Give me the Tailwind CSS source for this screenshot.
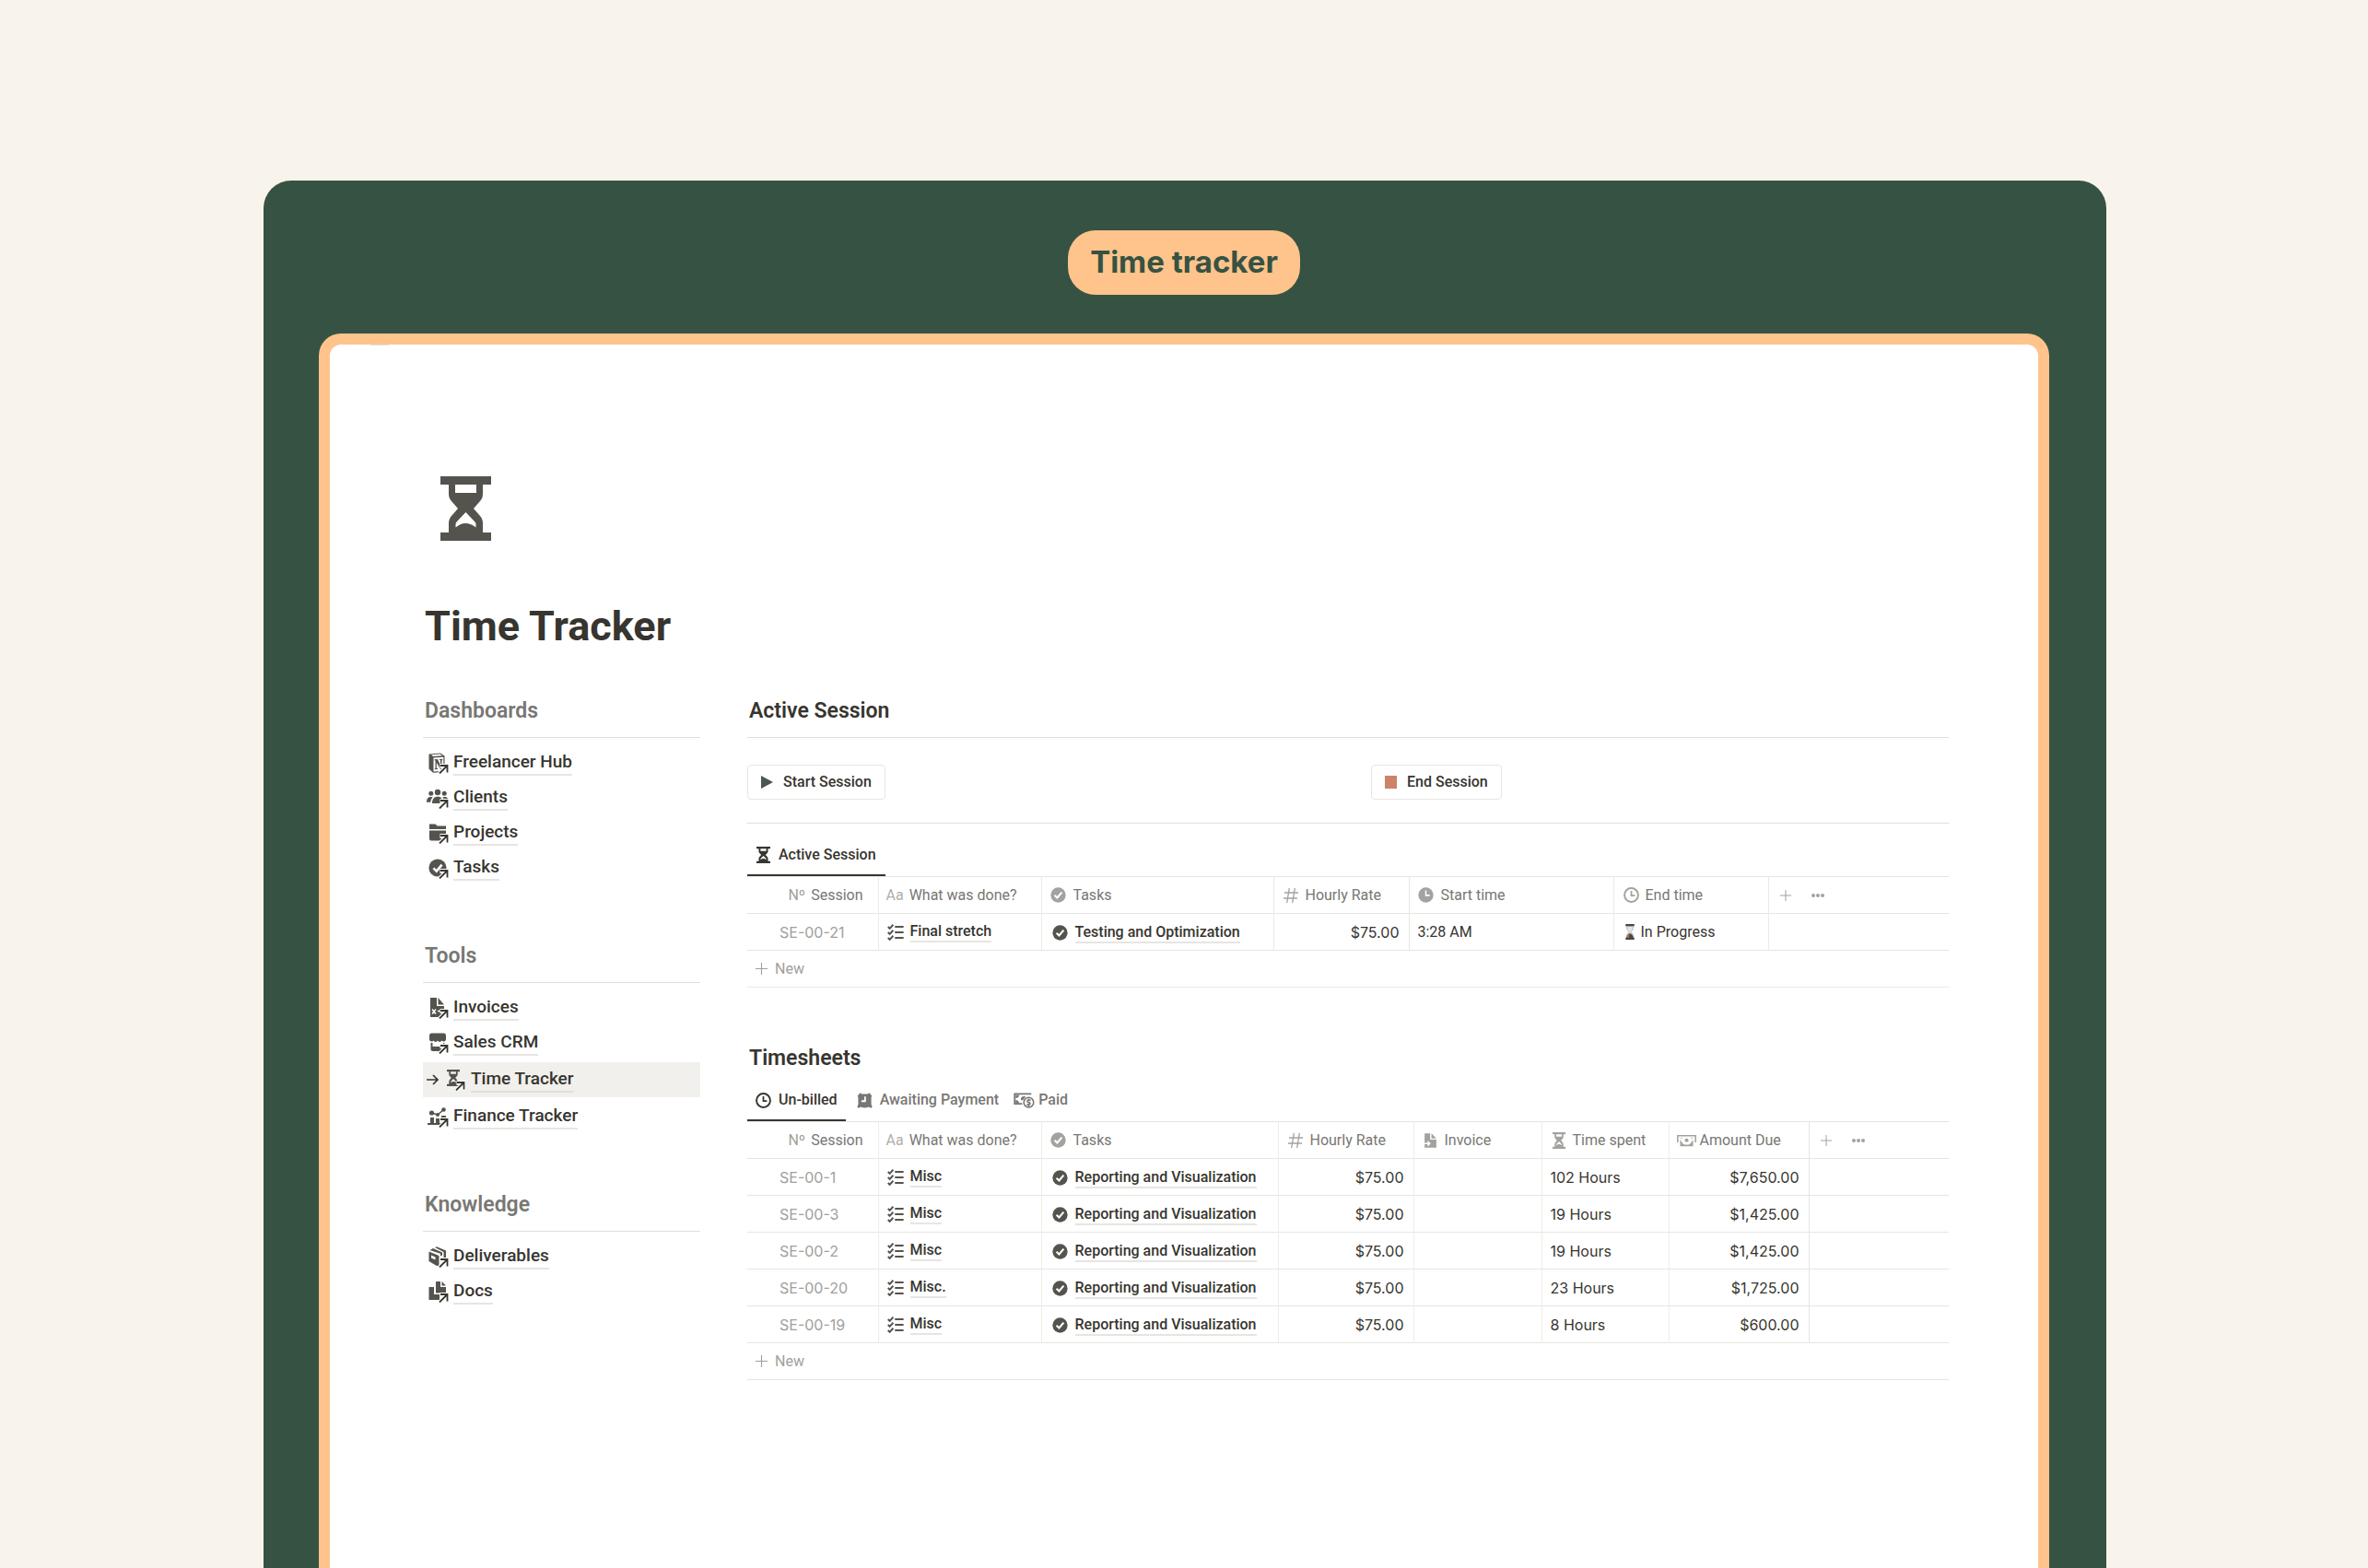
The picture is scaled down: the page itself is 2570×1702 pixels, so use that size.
<!DOCTYPE html>
<html lang="en">
<head>
<meta charset="utf-8">
<meta name="viewport" content="width=device-width, initial-scale=1">
<title>Time Tracker</title>
<script src="https://cdn.jsdelivr.net/npm/@tailwindcss/browser@4"></script>
</head>
<body class="bg-[#f8f3eb] font-[Roboto,sans-serif] text-base text-[#37352f]">

<!-- Icon sprite -->
<svg class="hidden" aria-hidden="true">
  <defs>
    <symbol id="hourglass" viewBox="0 0 55 70" preserveAspectRatio="none">
      <path fill="currentColor" fill-rule="evenodd" d="M0 0H55V9H46V19C46 22 45 25 43 27L36 35L43 43C45 45 46 48 46 51V61H55V70H0V61H9V51C9 48 10 45 12 43L19 35L12 27C10 25 9 22 9 19V9H0ZM16 9H39V18H16ZM27.500 39L37 49C38 50 38.500 51 38.500 52V55.500C35 53 32 51 27.500 51S20 53 16.500 55.500V52C16.500 51 17 50 18 49Z"/>
    </symbol>
    <!-- arrow marking a linked page -->
    <symbol id="link-arrow" viewBox="0 0 24 24">
      <path fill="none" stroke="#fff" stroke-width="5" d="M14.500 15.500H22.500V23.500M22 16L14 24"/>
      <path fill="none" stroke="#37352f" stroke-width="1.800" d="M15 15H22.500V22.500M22 15.500L14 23.500"/>
    </symbol>
    <symbol id="notion" viewBox="0 0 24 24">
      <path fill="currentColor" d="M3 2.500L15 1.500L19.500 4.500V22L7 22.800L2.500 18.500V3Z"/>
      <path fill="#fff" d="M5 3.200L14.600 2.500L17 4.200L7 5ZM7.500 6.500L18.300 5.800V20.800L7.500 21.500Z"/>
      <path fill="currentColor" d="M8.500 8.300L11.800 8.100L15 14.200V9.300L13.900 9.100V8.100L17.300 7.900V8.900L16.500 9.200V19L15 19.100L10.800 11.800V17.800L12 18.100V19.100L8.700 19.300V18.300L9.500 18V9.500L8.500 9.300Z"/>
    </symbol>
    <symbol id="people" viewBox="0 0 24 24">
      <g fill="currentColor"><circle cx="12" cy="6" r="3.200"/><circle cx="4.800" cy="7.300" r="2.500"/><circle cx="19.200" cy="7.300" r="2.500"/>
      <path d="M6 18C6 13.500 8 10.800 12 10.800S18 13.500 18 18ZM0 16.800C0 13 1.500 11 4.800 11C5.500 11 6 11.100 6.600 11.400C5.200 12.800 4.500 14.500 4.300 16.800ZM24 16.800C24 13 22.500 11 19.200 11C18.500 11 18 11.100 17.400 11.400C18.800 12.800 19.500 14.500 19.700 16.800Z"/></g>
    </symbol>
    <symbol id="folder" viewBox="0 0 24 24">
      <path fill="currentColor" d="M3 2.500H9.500L11.500 4.500H21V8H3ZM3 9.500H21V18.500Q21 20.500 19 20.500H5Q3 20.500 3 18.500Z"/>
    </symbol>
    <symbol id="check" viewBox="0 0 24 24">
      <circle cx="12" cy="12" r="11.500" fill="currentColor"/>
      <path fill="none" stroke="#fff" stroke-width="3" d="M6.500 12.500L10.500 16.300L17.500 8"/>
    </symbol>
    <symbol id="invoice" viewBox="0 0 24 24">
      <path fill="currentColor" d="M4 1H11V10H19V22H4ZM12.500 1L19 8.500H12.500Z"/>
      <path fill="none" stroke="#fff" stroke-width="1.500" d="M6 13.500L10 18.500M10 13.500L6 18.500M12 15.500H16"/>
    </symbol>
    <symbol id="invoice-arrow" viewBox="0 0 24 24">
      <path fill="currentColor" d="M3 1H11.500V10.500H21V23H3ZM13.500 1L21 8.700H13.500Z"/>
      <path fill="none" stroke="#fff" stroke-width="2" d="M3 16.500H10M7.500 13L11 16.500L7.500 20"/>
    </symbol>
    <symbol id="store" viewBox="0 0 24 24">
      <path fill="currentColor" d="M5 1.500H19Q21 1.500 21 4V8.500A2.500 2.500 0 0 1 16.500 9.500A2.500 2.500 0 0 1 12 9.500A2.500 2.500 0 0 1 7.500 9.500A2.500 2.500 0 0 1 3 8.500V4Q3 1.500 5 1.500ZM4.500 12H6.500V16H18V12H19.500V21H6.500Q4.500 21 4.500 19Z"/>
    </symbol>
    <symbol id="chart" viewBox="0 0 24 24">
      <g fill="currentColor"><circle cx="5.500" cy="8" r="2.600"/><circle cx="12" cy="10" r="2"/><circle cx="18.500" cy="4.500" r="2.300"/><path d="M1 19H4V13H8V19H10V14H14V19H16V11H21V21H1Z"/></g>
      <path fill="none" stroke="currentColor" stroke-width="1.500" d="M5.500 8L12 10L18.500 4.500"/>
    </symbol>
    <symbol id="box" viewBox="0 0 24 24">
      <path fill="currentColor" fill-rule="evenodd" d="M2.500 6.500L13.500 11V22.500L10 21.500L2.500 17ZM5 10.500V13.500L9.500 15.500V12.500ZM3.500 5L7 3L17 7.500V10.500L15 11.500V8.800ZM9 2L11 1.200L21 5.500V16L18.500 17V7Z"/>
    </symbol>
    <symbol id="docs" viewBox="0 0 24 24">
      <path fill="currentColor" d="M2.500 7H8V15H14V21H2.500ZM10 1H15V7H21V13.500H10ZM16.500 1L21 5.500H16.500Z"/>
    </symbol>
    <symbol id="checklist" viewBox="0 0 24 24">
      <path fill="none" stroke="currentColor" stroke-width="2.600" d="M1 4L3.500 6.500L8.500 1M1 12L3.500 14.500L8.500 9M1 20L3.500 22.500L8.500 17M11 4H23.500M11 12H23.500M11 20H23.500"/>
    </symbol>
    <symbol id="hash" viewBox="0 0 24 24">
      <path fill="none" stroke="currentColor" stroke-width="2" d="M9.500 0L5.500 24M18.500 0L14.500 24M1.500 7.500H24M0 16.500H22.500"/>
    </symbol>
    <symbol id="clock-solid" viewBox="0 0 24 24">
      <circle cx="12" cy="12" r="11.500" fill="currentColor"/><path fill="none" stroke="#fff" stroke-width="2.200" d="M12 5V12.500H18"/>
    </symbol>
    <symbol id="clock" viewBox="0 0 24 24">
      <circle cx="12" cy="12" r="10.500" fill="none" stroke="currentColor" stroke-width="2.700"/><path fill="none" stroke="currentColor" stroke-width="2.500" d="M12 5.500V13H17.500"/>
    </symbol>
    <symbol id="alarm" viewBox="0 0 24 24">
      <path fill="currentColor" d="M1 5L5 .5L7.500 2H16.500L19 .5L23 5L22 7V18L23.500 22L21.500 23.500L18 22Q12 24.500 6 22L2.500 23.500L.5 22L2 18V7Z"/><path fill="none" stroke="#fff" stroke-width="2.600" d="M12.500 6V13H7"/>
    </symbol>
    <symbol id="cash" viewBox="0 0 32 24">
      <path fill="none" stroke="currentColor" stroke-width="2.500" d="M13 17H1.500V2H27"/>
      <path fill="currentColor" d="M3 3.500H8.500Q8 8 3 8.500ZM3 11Q7.500 11.500 8.500 16.500H3ZM11 10.500Q10.500 5.500 16 5.500H18.500L14 11.500H12Z"/>
      <circle cx="23" cy="15" r="7.500" fill="none" stroke="currentColor" stroke-width="2.200"/>
      <path fill="none" stroke="currentColor" stroke-width="2.400" d="M26 12C21.500 10 19 14 23 15S24.500 19.500 20 18M23 9V11.500M23 18.500V21"/>
    </symbol>
    <symbol id="bill" viewBox="0 0 30 24" preserveAspectRatio="none">
      <path fill="none" stroke="currentColor" stroke-width="2.200" d="M1.200 15V4.200H28.800V15"/>
      <path fill="currentColor" d="M5 10.500L9.500 17.500Q15 20 20.500 17.500L25 10.500V21.500H5ZM5 7.500H9L7 9ZM25 7.500H21L23 9Z"/>
      <circle cx="15" cy="11.500" r="3" fill="currentColor"/>
    </symbol>
    <symbol id="plus" viewBox="0 0 14 14"><path fill="none" stroke="currentColor" stroke-width="1.200" d="M7 0V14M0 7H14"/></symbol>
    <symbol id="dots" viewBox="0 0 14 14"><g fill="currentColor"><circle cx="2" cy="7" r="2"/><circle cx="7" cy="7" r="2"/><circle cx="12" cy="7" r="2"/></g></symbol>
    <symbol id="sand" viewBox="0 0 12 18">
      <path fill="#e3e6e8" stroke="#a9adb0" stroke-width=".8" d="M2 2.500H10Q10 7 7 9Q10 11 10 15.500H2Q2 11 5 9Q2 7 2 2.500Z"/>
      <path fill="#4b4744" d="M1 0H11V2.500H1ZM1 15.500H11V18H1ZM2.200 15.500Q3 11.500 6 10.500Q9.500 12 10 15.500Z"/><path fill="#c7694b" d="M2.500 15.500Q3 12.500 5.500 11.500L5 15.500Z"/>
    </symbol>
  </defs>
</svg>

<div class="flex min-h-screen flex-col pt-[196px] pr-[284px] pl-[286px]">
  <div class="flex flex-1 flex-col rounded-t-[30px] bg-[#365242] pt-[54px] pr-[62px] pl-[60px]">
    <div class="flex justify-center">
      <div class="flex h-[70px] items-center rounded-[30px] bg-[#ffc38c] px-6 font-[Inter,sans-serif] text-[33px] font-bold text-[#365242]">Time tracker</div>
    </div>

    <main class="relative mt-[42px] flex-1 rounded-t-3xl border-12 border-b-0 border-[#ffc38c] bg-white pt-[143px] pr-[97px] pl-[101px]">
      <span class="absolute top-0 left-11 h-px w-5 bg-[#dfe3ea]"></span>
      <svg class="ml-[19px] h-[70px] w-[55px] text-[#55534e]"><use href="#hourglass"/></svg>
      <h1 class="mt-[63px] pl-[2px] text-[45px] leading-[60px] font-bold">Time Tracker</h1>

      <div class="mt-[42px] flex gap-[51px]">
        <!-- Sidebar -->
        <nav class="flex w-[301px] shrink-0 flex-col gap-[57px] text-[19px] font-medium text-[#37352f]">
          <section>
            <h2 class="pl-[2px] text-[23px] leading-10 font-semibold text-[#787774]">Dashboards</h2>
            <ul class="mt-2 border-t border-[#dededc] pt-2">
              <li class="flex h-[38px] items-center gap-[5px] pl-1">
                <svg class="size-6 overflow-visible text-[#55534e]"><use href="#notion"/><use href="#link-arrow"/></svg>
                <a href="#" class="border-b-2 border-[#e6e5e1] leading-[26px]">Freelancer Hub</a>
              </li>
              <li class="flex h-[38px] items-center gap-[5px] pl-1">
                <svg class="size-6 overflow-visible text-[#55534e]"><use href="#people"/><use href="#link-arrow"/></svg>
                <a href="#" class="border-b-2 border-[#e6e5e1] leading-[26px]">Clients</a>
              </li>
              <li class="flex h-[38px] items-center gap-[5px] pl-1">
                <svg class="size-6 overflow-visible text-[#55534e]"><use href="#folder"/><use href="#link-arrow"/></svg>
                <a href="#" class="border-b-2 border-[#e6e5e1] leading-[26px]">Projects</a>
              </li>
              <li class="flex h-[38px] items-center gap-[5px] pl-1">
                <svg class="size-6 overflow-visible text-[#55534e]"><use href="#check" x="2" y="2" width="20" height="20"/><use href="#link-arrow"/></svg>
                <a href="#" class="border-b-2 border-[#e6e5e1] leading-[26px]">Tasks</a>
              </li>
            </ul>
          </section>
          <section>
            <h2 class="pl-[2px] text-[23px] leading-10 font-semibold text-[#787774]">Tools</h2>
            <ul class="mt-2 border-t border-[#dededc] pt-2">
              <li class="flex h-[38px] items-center gap-[5px] pl-1">
                <svg class="size-6 overflow-visible text-[#55534e]"><use href="#invoice"/><use href="#link-arrow"/></svg>
                <a href="#" class="border-b-2 border-[#e6e5e1] leading-[26px]">Invoices</a>
              </li>
              <li class="flex h-[38px] items-center gap-[5px] pl-1">
                <svg class="size-6 overflow-visible text-[#55534e]"><use href="#store"/><use href="#link-arrow"/></svg>
                <a href="#" class="border-b-2 border-[#e6e5e1] leading-[26px]">Sales CRM</a>
              </li>
              <li class="my-[2px] flex h-[38px] items-center bg-[#f2f0ec] pl-1">
                <svg class="mr-2 h-4 w-[13px]" viewBox="0 0 13 16"><path fill="none" stroke="#37352f" stroke-width="1.700" d="M0 8H12M7 3L12 8L7 13"/></svg>
                <svg class="mr-[3px] size-6 overflow-visible text-[#55534e]"><use href="#hourglass" x="1" y="1" width="14" height="18"/><use href="#link-arrow" x="-3"/></svg>
                <a href="#" class="border-b-2 border-[#e0dfda] leading-[26px]">Time Tracker</a>
              </li>
              <li class="flex h-[38px] items-center gap-[5px] pl-1">
                <svg class="size-6 overflow-visible text-[#55534e]"><use href="#chart"/><use href="#link-arrow"/></svg>
                <a href="#" class="border-b-2 border-[#e6e5e1] leading-[26px]">Finance Tracker</a>
              </li>
            </ul>
          </section>
          <section>
            <h2 class="pl-[2px] text-[23px] leading-10 font-semibold text-[#787774]">Knowledge</h2>
            <ul class="mt-2 border-t border-[#dededc] pt-2">
              <li class="flex h-[38px] items-center gap-[5px] pl-1">
                <svg class="size-6 overflow-visible text-[#55534e]"><use href="#box"/><use href="#link-arrow"/></svg>
                <a href="#" class="border-b-2 border-[#e6e5e1] leading-[26px]">Deliverables</a>
              </li>
              <li class="flex h-[38px] items-center gap-[5px] pl-1">
                <svg class="size-6 overflow-visible text-[#55534e]"><use href="#docs"/><use href="#link-arrow"/></svg>
                <a href="#" class="border-b-2 border-[#e6e5e1] leading-[26px]">Docs</a>
              </li>
            </ul>
          </section>
        </nav>

        <!-- Content -->
        <div class="min-w-0 flex-1">
          <section>
            <h2 class="pl-[2px] text-[23px] leading-10 font-semibold">Active Session</h2>
            <div class="mt-2 grid grid-cols-[677px_1fr] border-y border-[#dededc] pt-[29px] pb-[25px] font-medium">
              <div><button class="flex h-[38px] items-center rounded border border-[#e6e5e1] px-[14px]"><svg class="mr-[11px] h-[14px] w-[13px]" viewBox="0 0 13 14"><path fill="#4d5651" d="M0 0L13 7L0 14Z"/></svg>Start Session</button></div>
              <div><button class="flex h-[38px] items-center rounded border border-[#e6e5e1] px-[14px]"><span class="mr-[11px] h-[14px] w-[13px] bg-[#cd8367]"></span>End Session</button></div>
            </div>

            <div class="mt-[13px] flex font-medium">
              <button class="flex h-11 items-center border-b-2 border-[#37352f] px-[10px]"><svg class="mr-[9px] h-[18px] w-[15px]"><use href="#hourglass"/></svg>Active Session</button>
            </div>
            <table class="w-full table-fixed border-collapse border-y border-[#e6e5e1] text-left">
              <colgroup><col class="w-[142px]"><col class="w-[177px]"><col class="w-[252px]"><col class="w-[147px]"><col class="w-[222px]"><col class="w-[168px]"><col></colgroup>
              <thead>
                <tr class="h-10 border-b border-[#e6e5e1] text-[#787774]">
                  <th class="border-r border-[#edeae5] p-0 font-normal"><span class="flex items-center justify-end pr-4"><span class="mr-[6px] text-[#a09f9b]">Nº</span>Session</span></th>
                  <th class="border-r border-[#edeae5] p-0 font-normal"><span class="flex items-center pl-2"><span class="mr-[6px] text-[#b0afab]">Aa</span>What was done?</span></th>
                  <th class="border-r border-[#edeae5] p-0 font-normal"><span class="flex items-center pl-[9px]"><svg class="mr-2 size-[17px] text-[#a3a29e]"><use href="#check"/></svg>Tasks</span></th>
                  <th class="border-r border-[#e6e5e1] p-0 font-normal"><span class="flex items-center pl-[10px]"><svg class="mr-2 h-[18px] w-4 text-[#a3a29e]"><use href="#hash"/></svg>Hourly Rate</span></th>
                  <th class="border-r border-[#edeae5] p-0 font-normal"><span class="flex items-center pl-[9px]"><svg class="mr-2 size-[17px] text-[#a3a29e]"><use href="#clock-solid"/></svg>Start time</span></th>
                  <th class="border-r border-[#edeae5] p-0 font-normal"><span class="flex items-center pl-[10px]"><svg class="mr-[7px] size-[17px] text-[#a3a29e]"><use href="#clock"/></svg>End time</span></th>
                  <th class="p-0 font-normal"><span class="flex items-center gap-[22px] pl-3 text-[#a3a29e]"><button aria-label="Add property"><svg class="size-3"><use href="#plus"/></svg></button><button aria-label="More"><svg class="size-[14px]"><use href="#dots"/></svg></button></span></th>
                </tr>
              </thead>
              <tbody>
                <tr class="h-10">
                  <td class="border-r border-[#edeae5] p-0 pl-[35px] font-[Inter,sans-serif] text-[#a09f9b]">SE-00-21</td>
                  <td class="border-r border-[#edeae5] p-0"><span class="flex items-center pl-[9px] font-medium"><svg class="mr-[7px] size-[18px] text-[#55534e]"><use href="#checklist"/></svg><a href="#" class="border-b-2 border-[#e6e5e1] leading-5">Final stretch</a></span></td>
                  <td class="border-r border-[#edeae5] p-0"><span class="flex items-center pt-[2px] pl-[11px] font-medium"><svg class="mr-2 size-[17px] text-[#55534e]"><use href="#check"/></svg><a href="#" class="border-b-2 border-[#e6e5e1] leading-5">Testing and Optimization</a></span></td>
                  <td class="border-r border-[#e6e5e1] p-0 pr-[10px] text-right font-[Inter,sans-serif]">$75.00</td>
                  <td class="border-r border-[#edeae5] p-0 pl-[9px]">3:28 AM</td>
                  <td class="border-r border-[#edeae5] p-0"><span class="flex items-center pl-[11px]"><svg class="mr-[6px] h-[17px] w-3"><use href="#sand"/></svg>In Progress</span></td>
                  <td class="p-0"></td>
                </tr>
              </tbody>
            </table>
            <button class="flex h-10 w-full items-center border-b border-[#edeae5] pl-[9px] text-[#a09f9b]"><svg class="mr-2 size-[13px]"><use href="#plus"/></svg>New</button>
          </section>

          <section class="mt-[57px]">
            <h2 class="pl-[2px] text-[23px] leading-10 font-semibold">Timesheets</h2>
            <div class="mt-1 flex font-medium text-[#787774]">
              <button class="flex h-11 items-center border-b-2 border-[#37352f] px-[9px] text-[#37352f]"><svg class="mr-2 size-[17px]"><use href="#clock"/></svg>Un-billed</button>
              <button class="flex h-11 items-center border-b-2 border-transparent pr-2 pl-3"><svg class="mr-2 size-[17px]"><use href="#alarm"/></svg>Awaiting Payment</button>
              <button class="flex h-11 items-center border-b-2 border-transparent px-2"><svg class="mr-1 h-[17px] w-[23px]"><use href="#cash"/></svg>Paid</button>
            </div>
            <table class="w-full table-fixed border-collapse border-y border-[#e6e5e1] text-left">
              <colgroup><col class="w-[142px]"><col class="w-[177px]"><col class="w-[257px]"><col class="w-[147px]"><col class="w-[139px]"><col class="w-[138px]"><col class="w-[152px]"><col></colgroup>
              <thead>
                <tr class="h-10 border-b border-[#e6e5e1] text-[#787774]">
                  <th class="border-r border-[#f1ece3] p-0 font-normal"><span class="flex items-center justify-end pr-4"><span class="mr-[6px] text-[#a09f9b]">Nº</span>Session</span></th>
                  <th class="border-r border-[#f1ece3] p-0 font-normal"><span class="flex items-center pl-2"><span class="mr-[6px] text-[#b0afab]">Aa</span>What was done?</span></th>
                  <th class="border-r border-[#f1ece3] p-0 font-normal"><span class="flex items-center pl-[9px]"><svg class="mr-2 size-[17px] text-[#a3a29e]"><use href="#check"/></svg>Tasks</span></th>
                  <th class="border-r border-[#f1ece3] p-0 font-normal"><span class="flex items-center pl-[10px]"><svg class="mr-2 h-[18px] w-4 text-[#a3a29e]"><use href="#hash"/></svg>Hourly Rate</span></th>
                  <th class="border-r border-[#f1ece3] p-0 font-normal"><span class="flex items-center pl-[9px]"><svg class="mr-[7px] h-[18px] w-[17px] text-[#a3a29e]"><use href="#invoice-arrow"/></svg>Invoice</span></th>
                  <th class="border-r border-[#f1ece3] p-0 font-normal"><span class="flex items-center pl-[11px]"><svg class="mr-2 h-[18px] w-[14px] text-[#a3a29e]"><use href="#hourglass"/></svg>Time spent</span></th>
                  <th class="border-r border-[#e6e5e1] p-0 font-normal"><span class="flex items-center pl-2"><svg class="mr-1 h-4 w-[21px] text-[#a3a29e]"><use href="#bill"/></svg>Amount Due</span></th>
                  <th class="p-0 font-normal"><span class="flex items-center gap-[22px] pl-3 text-[#a3a29e]"><button aria-label="Add property"><svg class="size-3"><use href="#plus"/></svg></button><button aria-label="More"><svg class="size-[14px]"><use href="#dots"/></svg></button></span></th>
                </tr>
              </thead>
              <tbody id="rows"></tbody>
            </table>
            <button class="flex h-10 w-full items-center border-b border-[#e6e5e1] pl-[9px] text-[#a09f9b]"><svg class="mr-2 size-[13px]"><use href="#plus"/></svg>New</button>
          </section>
        </div>
      </div>
    </main>
  </div>
</div>

<script>
  const sessions = [
    ['SE-00-1', 'Misc', '102 Hours', '$7,650.00'],
    ['SE-00-3', 'Misc', '19 Hours', '$1,425.00'],
    ['SE-00-2', 'Misc', '19 Hours', '$1,425.00'],
    ['SE-00-20', 'Misc.', '23 Hours', '$1,725.00'],
    ['SE-00-19', 'Misc', '8 Hours', '$600.00'],
  ];
  document.getElementById('rows').innerHTML = sessions.map(([id, work, hours, due]) => `
    <tr class="h-10 border-b border-[#e6e5e1]">
      <td class="border-r border-[#f1ece3] p-0 pl-[35px] font-[Inter,sans-serif] text-[#a09f9b]">${id}</td>
      <td class="border-r border-[#f1ece3] p-0"><span class="flex items-center pl-[9px] font-medium"><svg class="mr-[7px] size-[18px] text-[#55534e]"><use href="#checklist"/></svg><a href="#" class="border-b-2 border-[#e6e5e1] leading-5">${work}</a></span></td>
      <td class="border-r border-[#f1ece3] p-0"><span class="flex items-center pt-[2px] pl-[11px] font-medium"><svg class="mr-2 size-[17px] text-[#55534e]"><use href="#check"/></svg><a href="#" class="border-b-2 border-[#e6e5e1] leading-5">Reporting and Visualization</a></span></td>
      <td class="border-r border-[#f1ece3] p-0 pr-[10px] text-right font-[Inter,sans-serif]">$75.00</td>
      <td class="border-r border-[#f1ece3] p-0"></td>
      <td class="border-r border-[#f1ece3] p-0 pl-[9px] font-[Inter,sans-serif]">${hours}</td>
      <td class="border-r border-[#e6e5e1] p-0 pr-[10px] text-right font-[Inter,sans-serif]">${due}</td>
      <td class="p-0"></td>
    </tr>`).join('');
</script>
</body>
</html>
